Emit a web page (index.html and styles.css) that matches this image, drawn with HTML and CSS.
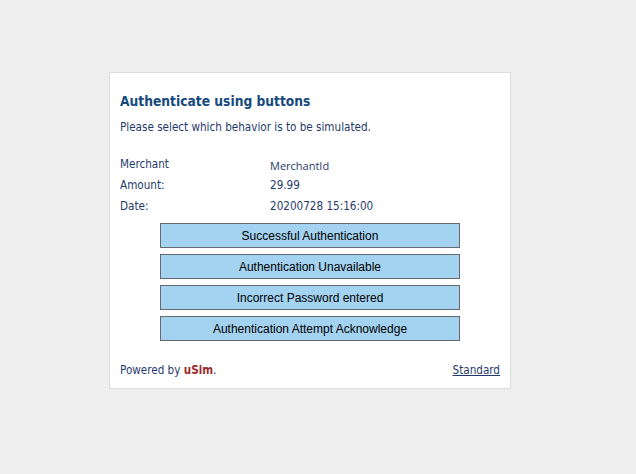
FILE: index.html
```html
<!DOCTYPE html>
<html>
<head>
<meta charset="utf-8">
<link rel="stylesheet" href="styles.css">
</head>
<body>
<div class="page">
  <div class="card">
    <h1 class="title">Authenticate using buttons</h1>
    <p class="intro">Please select which behavior is to be simulated.</p>
    <div class="details">
      <div class="label">Merchant</div><div class="value merchant">MerchantId</div>
      <div class="label">Amount:</div><div class="value">29.99</div>
      <div class="label">Date:</div><div class="value">20200728 15:16:00</div>
    </div>
    <div class="buttons">
      <button class="btn">Successful Authentication</button>
      <button class="btn">Authentication Unavailable</button>
      <button class="btn">Incorrect Password entered</button>
      <button class="btn">Authentication Attempt Acknowledge</button>
    </div>
    <div class="footer">
      <span class="powered">Powered by <b class="brand">uSim</b>.</span>
      <a class="std" href="#">Standard</a>
    </div>
  </div>
</div>
</body>
</html>
```

FILE: styles.css
```css
html, body {
  margin: 0;
  padding: 0;
  background: #eeeeee;
}
body {
  font-family: "DejaVu Sans Condensed", "DejaVu Sans", sans-serif;
  color: #1f3a6a;
  font-size: 11.6px;
}
.page {
  padding-top: 72px;
  padding-left: 109px;
}
.card {
  box-sizing: border-box;
  width: 402px;
  height: 317px;
  background: #ffffff;
  border: 1px solid #dcdcdc;
  padding: 0 10px 0 10px;
}
.title {
  margin: 19px 0 0 0;
  font-size: 13.7px;
  font-weight: bold;
  color: #164a7c;
  line-height: 18px;
}
.intro {
  margin: 9px 0 0 0;
  line-height: 16px;
}
.details {
  margin-top: 21px;
  display: grid;
  grid-template-columns: 150px 1fr;
  grid-auto-rows: 21px;
  line-height: 16px;
}
.merchant {
  font-family: "Open Sans", sans-serif;
  font-size: 11px;
  padding-top: 2px;
}
.buttons {
  margin-top: 4px;
  display: flex;
  flex-direction: column;
  gap: 6px;
  padding-left: 40px;
}
.btn {
  width: 300px;
  height: 25px;
  margin: 0;
  padding: 0;
  background: #a3d3f1;
  border: 1px solid #666a70;
  font-family: "Liberation Sans", Arial, sans-serif;
  font-size: 12px;
  color: #000000;
}
.footer {
  margin-top: 21px;
  display: flex;
  justify-content: space-between;
  line-height: 16px;
}
.brand {
  color: #9c2a2a;
}
.std {
  color: #1f3a6a;
  text-decoration: underline;
}
```
